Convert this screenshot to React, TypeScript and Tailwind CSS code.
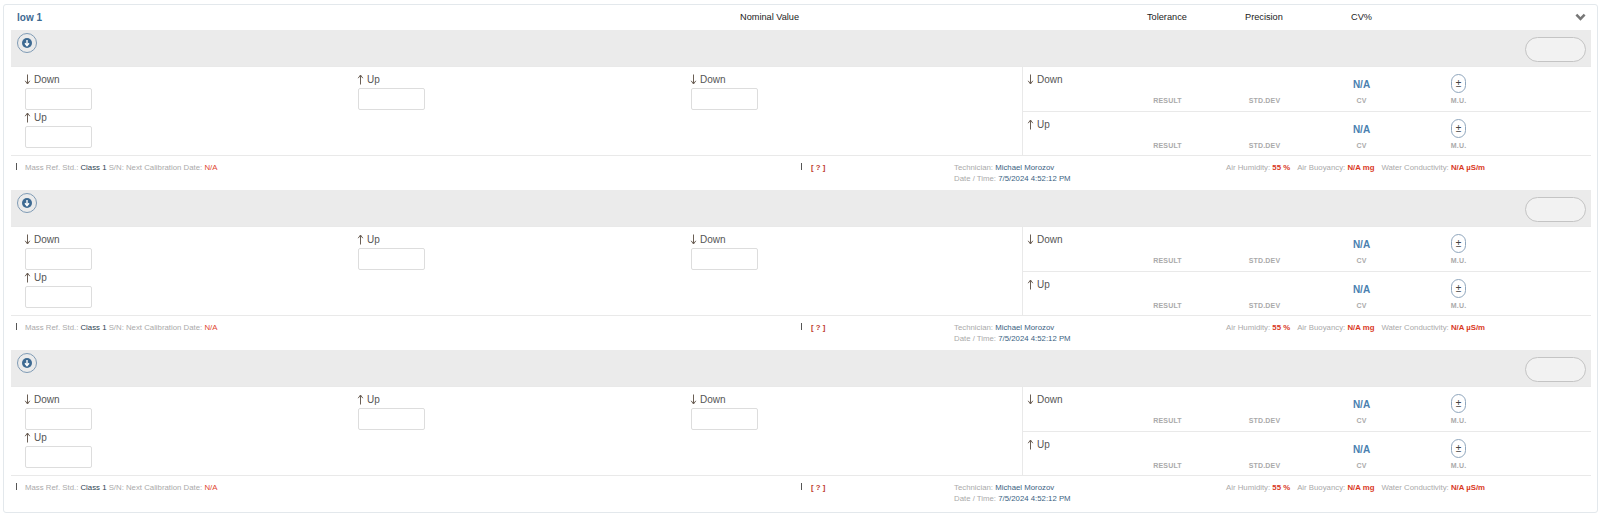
function DirectionLabel({ dir }: { dir: "down" | "up" }) {
  return (
    <div className="flex h-[13px] items-center text-[10px] leading-[13px] text-[#555]">
      <svg viewBox="0 0 7 11" className={`h-[11px] w-[7px] text-[#6b5f55] ${dir === "up" ? "rotate-180" : ""}`}>
        <path d="M3.5 0.5v9.5M1.2 6.8 3.5 10 5.8 6.8" fill="none" stroke="currentColor" strokeWidth="1" />
      </svg>
      <span className="ml-[3px]">{dir === "down" ? "Down" : "Up"}</span>
    </div>
  );
}

function WeightInput() {
  return <div className="ml-px mt-[2px] h-[22px] w-[67px] rounded-[2px] border border-[#ddd] bg-white" />;
}

function ResultRow({ dir, last }: { dir: "down" | "up"; last?: boolean }) {
  return (
    <div className={`flex h-[44.5px] pl-[4px] ${last ? "" : "border-b border-[#e9e9e9]"}`}>
      <div className="w-[92px] pt-[6px]">
        <DirectionLabel dir={dir} />
      </div>
      <div className="grid w-[388px] grid-cols-4 text-center">
        <Metric label="RESULT" />
        <Metric label="STD.DEV" />
        <Metric label="CV">
          <span className="mt-[3px] block text-[10px] font-bold leading-[19px] text-[#4a7fb0]">N/A</span>
        </Metric>
        <Metric label="M.U.">
          <div className="mx-auto mt-[2px] flex h-[19px] w-[15px] items-center justify-center rounded-[8px] border border-[#8fa6bd] text-[10px] text-[#444]">
            ±
          </div>
        </Metric>
      </div>
    </div>
  );
}

function Metric({ label, children }: { label: string; children?: React.ReactNode }) {
  return (
    <div className="flex flex-col items-center">
      <div className="mt-[5px] h-[21px]">{children}</div>
      <div className="mt-[3px] text-[7px] font-bold leading-[9px] tracking-[0.2px] text-[#aaa]">{label}</div>
    </div>
  );
}

function Block() {
  return (
    <section>
      <div className="flex h-[37px] items-start justify-between border-b border-[#e9e9e9] bg-[#ebebeb] pl-[6px] pr-[5px]">
        <div className="mt-[3px] flex h-[20px] w-[20px] items-center justify-center rounded-full border border-[#7f9bb5]">
          <div className="flex h-[10px] w-[10px] items-center justify-center rounded-full bg-[#3d6a92]">
            <svg viewBox="0 0 8 8" className="h-[8px] w-[8px] text-white">
              <path d="M4 1v5M2 4.2 4 6.6 6 4.2" fill="none" stroke="currentColor" strokeWidth="1.4" />
            </svg>
          </div>
        </div>
        <div className="mt-[7px] h-[25px] w-[61px] rounded-full border border-[#c4c4c4] bg-[#f2f2f2]" />
      </div>

      <div className="flex h-[89px] border-b border-[#e9e9e9]">
        <div className="grid w-[1011px] grid-cols-[333px_333px_1fr] pt-[6px]">
          <div className="pl-[13px]">
            <DirectionLabel dir="down" />
            <WeightInput />
            <div className="mt-[1px]">
              <DirectionLabel dir="up" />
            </div>
            <WeightInput />
          </div>
          <div className="pl-[13px]">
            <DirectionLabel dir="up" />
            <WeightInput />
          </div>
          <div className="pl-[13px]">
            <DirectionLabel dir="down" />
            <WeightInput />
          </div>
        </div>
        <div className="flex-1 border-l border-[#e9e9e9]">
          <ResultRow dir="down" />
          <ResultRow dir="up" last />
        </div>
      </div>

      <div className="flex h-[34px] pl-[5px] pt-[6px] text-[7.8px] leading-[11px] text-[#aaa]">
        <div className="flex w-[785px] items-start">
          <div className="mr-[8px] mt-[1px] h-[7px] w-px bg-[#555]" />
          <span>
            Mass Ref. Std.: <span className="text-[#2c3e50]">Class 1</span> S/N: Next Calibration Date:{" "}
            <span className="text-[#e0452c]">N/A</span>
          </span>
        </div>
        <div className="flex w-[153px] items-start">
          <div className="mr-[9px] mt-[1px] h-[7px] w-px bg-[#555]" />
          <span className="font-bold text-[#c0392b]">[ ? ]</span>
        </div>
        <div className="w-[272px]">
          <div>
            Technician: <span className="text-[#3b5f82]">Michael Morozov</span>
          </div>
          <div>
            Date / Time: <span className="text-[#3b5f82]">7/5/2024 4:52:12 PM</span>
          </div>
        </div>
        <div>
          Air Humidity: <span className="font-bold text-[#d9381e]">55 %</span>
          <span className="ml-[7px]">Air Buoyancy:</span> <span className="font-bold text-[#d9381e]">N/A mg</span>
          <span className="ml-[7px]">Water Conductivity:</span>{" "}
          <span className="font-bold text-[#d9381e]">N/A µS/m</span>
        </div>
      </div>
    </section>
  );
}

export default function App() {
  return (
    <div className="h-[517px] bg-white pl-[3px] pr-[2px] pt-[4px] font-['Liberation_Sans',Arial,sans-serif]">
      <div className="h-[509px] rounded-[3px] border border-[#e3e8ec] pl-[7px] pr-[6px]">
        <div className="relative flex h-[25px] items-center text-[9.2px] text-[#222]">
          <span className="ml-[6px] w-[723px] text-[10px] font-bold text-[#3d6a92]">low 1</span>
          <span className="w-[407px]">Nominal Value</span>
          <span className="w-[98px]">Tolerance</span>
          <span className="w-[106px]">Precision</span>
          <span>CV%</span>
          <svg viewBox="0 0 12 8" className="absolute right-[5px] top-[8px] h-[8px] w-[11px] text-[#777]">
            <path d="M1.5 1.5 6 6l4.5-4.5" fill="none" stroke="currentColor" strokeWidth="2.8" />
          </svg>
        </div>
        <Block />
        <Block />
        <Block />
      </div>
    </div>
  );
}
